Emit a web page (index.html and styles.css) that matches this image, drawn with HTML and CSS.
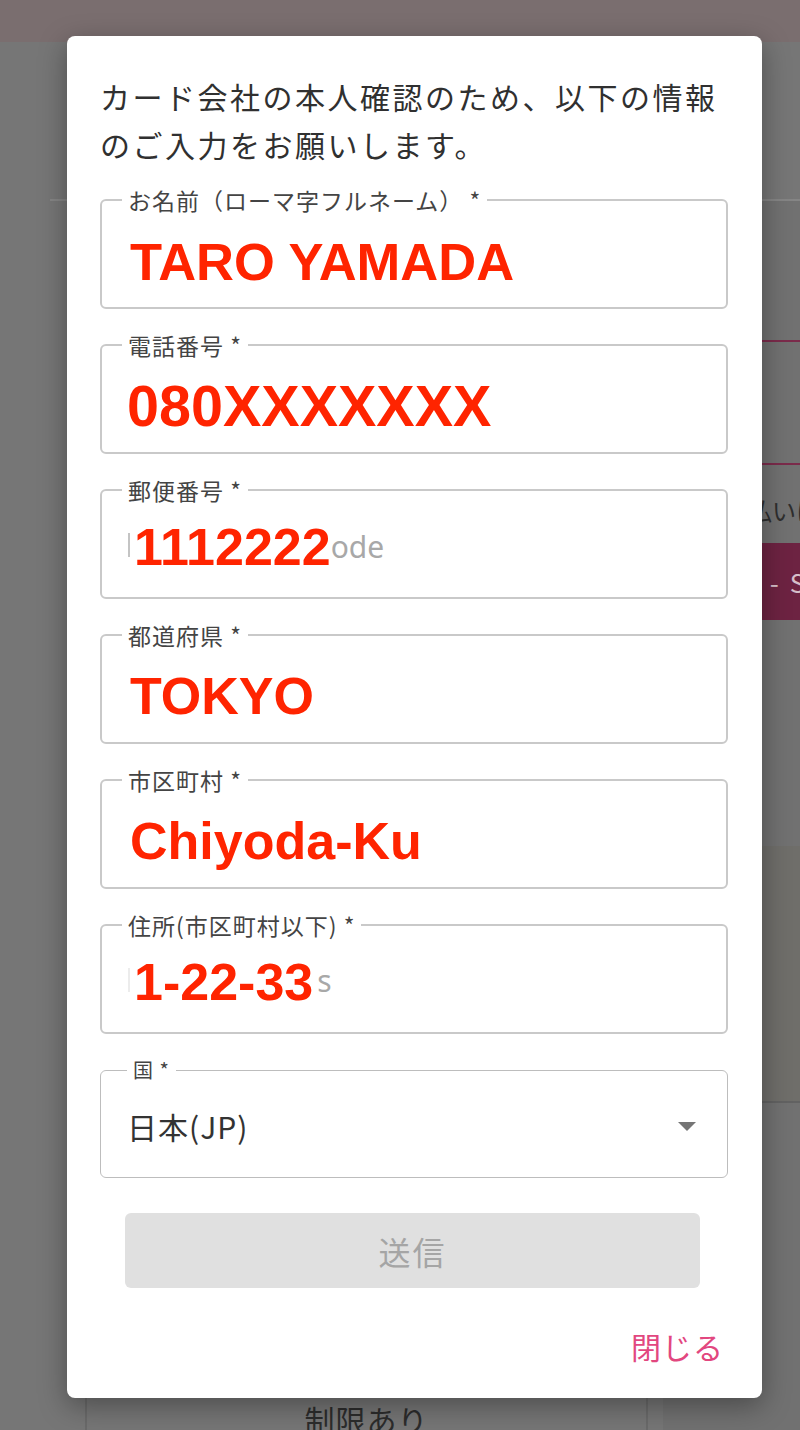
FILE: index.html
```html
<!DOCTYPE html>
<html lang="ja">
<head>
<meta charset="utf-8">
<title>本人確認</title>
<link rel="stylesheet" href="styles.css">
</head>
<body>
<div class="page">
  <header class="page-top"></header>
  <div class="page-divider"></div>
  <div class="page-body">
    <div class="page-main">
      <div class="limit-card">制限あり</div>
    </div>
    <aside class="page-side">
      <div class="side-box"></div>
      <p class="side-note">お支払いについて</p>
      <div class="side-btn">決済 - Start</div>
      <div class="side-panel"></div>
    </aside>
  </div>
</div>

<div class="modal" role="dialog">
  <p class="intro">カード会社の本人確認のため、以下の情報のご入力をお願いします。</p>
  <form class="form">
    <fieldset class="field">
      <legend>お名前（ローマ字フルネーム） *</legend>
      <div class="value"><span class="typed typed--name">TARO YAMADA</span></div>
    </fieldset>
    <fieldset class="field">
      <legend>電話番号 *</legend>
      <div class="value"><span class="typed typed--phone">080XXXXXXX</span></div>
    </fieldset>
    <fieldset class="field">
      <legend>郵便番号 *</legend>
      <div class="value value--low"><span class="ph-edge"></span><span class="typed typed--after-edge">1112222</span><span class="ph-rest">ode</span></div>
    </fieldset>
    <fieldset class="field">
      <legend>都道府県 *</legend>
      <div class="value"><span class="typed">TOKYO</span></div>
    </fieldset>
    <fieldset class="field">
      <legend>市区町村 *</legend>
      <div class="value"><span class="typed">Chiyoda-Ku</span></div>
    </fieldset>
    <fieldset class="field">
      <legend>住所(市区町村以下) *</legend>
      <div class="value value--low"><span class="ph-edge ph-edge--faint"></span><span class="typed typed--after-edge">1-22-33</span><span class="ph-rest ph-rest--s">s</span></div>
    </fieldset>
    <fieldset class="field field--select">
      <legend class="legend--small">国 *</legend>
      <div class="select-value">
        <span class="select-text">日本(JP)</span>
        <svg class="select-arrow" width="18" height="9" viewBox="0 0 18 9" aria-hidden="true"><path d="M0 0 H18 L9 9 Z" fill="#757575"/></svg>
      </div>
    </fieldset>
    <button type="button" class="submit" disabled>送信</button>
    <div class="actions"><button type="button" class="close">閉じる</button></div>
  </form>
</div>
</body>
</html>
```

FILE: styles.css
```css
html, body {
  margin: 0;
  padding: 0;
}

body {
  position: relative;
  width: 800px;
  height: 1430px;
  overflow: hidden;
  background: #767676;
  font-family: "Noto Sans CJK JP", "Noto Sans", sans-serif;
}

/* ---------- dimmed page behind the dialog ---------- */
.page-top {
  height: 42px;
  background: #7a6e6f;
}

.page-divider {
  margin: 157px 0 0 50px;
  height: 2px;
  background: #858585;
}

.page-body {
  display: grid;
  grid-template-columns: 563px 1fr;
  column-gap: 15px;
  padding-left: 85px;
}

.limit-card {
  margin-top: 1150px;
  height: 300px;
  box-sizing: border-box;
  padding-top: 50px;
  border-left: 2px solid #6a6a6a;
  border-right: 2px solid #6a6a6a;
  text-align: center;
  font-size: 30px;
  line-height: 36px;
  letter-spacing: 1px;
  color: #2c2c2c;
}

.page-side {
  background: #717171;
}

.side-box {
  margin-top: 139px;
  height: 125px;
  box-sizing: border-box;
  border-top: 2px solid #7b2b4b;
  border-bottom: 2px solid #7b2b4b;
}

.side-note {
  margin: 30px 0 0;
  padding-left: 37px;
  font-size: 24px;
  line-height: 30px;
  color: #2e2e2e;
  white-space: nowrap;
}

.side-btn {
  margin-top: 18px;
  height: 77px;
  padding-left: 44px;
  border-radius: 4px;
  background: #6d2342;
  color: #d6bfc9;
  font-size: 26px;
  line-height: 77px;
  word-spacing: 5px;
  white-space: nowrap;
}

.side-panel {
  margin-top: 226px;
  height: 255px;
  background: #6f6e6a;
  border-bottom: 2px solid #626262;
}

/* ---------- dialog ---------- */
.modal {
  position: absolute;
  left: 67px;
  top: 36px;
  width: 695px;
  height: 1362px;
  box-sizing: border-box;
  padding: 36px 34px 0 33px;
  background: #ffffff;
  border-radius: 8px;
  box-shadow: 0 8px 28px rgba(0, 0, 0, 0.35);
}

.intro {
  margin: 0;
  font-size: 30px;
  line-height: 48px;
  letter-spacing: 2.5px;
  color: #303030;
}

.form {
  margin-top: 18px;
}

.field {
  margin: 0 0 22px;
  padding: 0 26px;
  min-width: 0;
  border: 2px solid #c9c9c9;
  border-radius: 6px;
}

.field legend {
  margin-left: -6px;
  padding: 0 6px;
  font-size: 23px;
  line-height: 28px;
  letter-spacing: 1px;
  color: #444444;
}

.value {
  height: 93px;
  box-sizing: border-box;
  padding-top: 2px;
  line-height: 91px;
  white-space: nowrap;
  font-family: "Liberation Sans", Arial, sans-serif;
}

.value--low {
  padding-top: 0;
  line-height: 86px;
}

.typed {
  margin-left: 2px;
  font-size: 52px;
  font-weight: 700;
  color: #ff2400;
}

.typed--name {
  font-size: 52.5px;
}

.typed--phone {
  margin-left: -1px;
  font-size: 57.5px;
}

.typed--after-edge {
  margin-left: 4px;
}

.ph-edge {
  display: inline-block;
  width: 2px;
  height: 24px;
  vertical-align: 8px;
  background: #c4c4c4;
}

.ph-edge--faint {
  background: #ececec;
}

.ph-rest {
  font-family: "Noto Sans", sans-serif;
  font-size: 30px;
  line-height: 1;
  color: #a8a8a8;
  vertical-align: 7px;
}

.ph-rest--s {
  margin-left: 4px;
  vertical-align: 8px;
}

.field--select {
  margin-bottom: 0;
  border: 1px solid #bdbdbd;
}

.field .legend--small {
  margin-left: 0;
  font-size: 20px;
}

.select-value {
  display: flex;
  align-items: center;
  height: 93px;
  box-sizing: border-box;
  padding-bottom: 9px;
}

.select-text {
  font-size: 30px;
  letter-spacing: 1px;
  color: #333333;
}

.select-arrow {
  margin-left: auto;
  margin-right: 5px;
}

.submit {
  display: block;
  width: 575px;
  height: 75px;
  margin: 35px 0 0 25px;
  padding: 0;
  border: 0;
  border-radius: 6px;
  background: #e0e0e0;
  color: #a5a5a5;
  font-family: "Noto Sans CJK JP", sans-serif;
  font-size: 32px;
  letter-spacing: 2px;
}

.actions {
  margin: 38px 4px 0 0;
  text-align: right;
}

.close {
  padding: 0;
  border: 0;
  background: none;
  font-family: "Noto Sans CJK JP", sans-serif;
  font-size: 30px;
  line-height: 40px;
  letter-spacing: 1px;
  color: #e2477f;
}
```
